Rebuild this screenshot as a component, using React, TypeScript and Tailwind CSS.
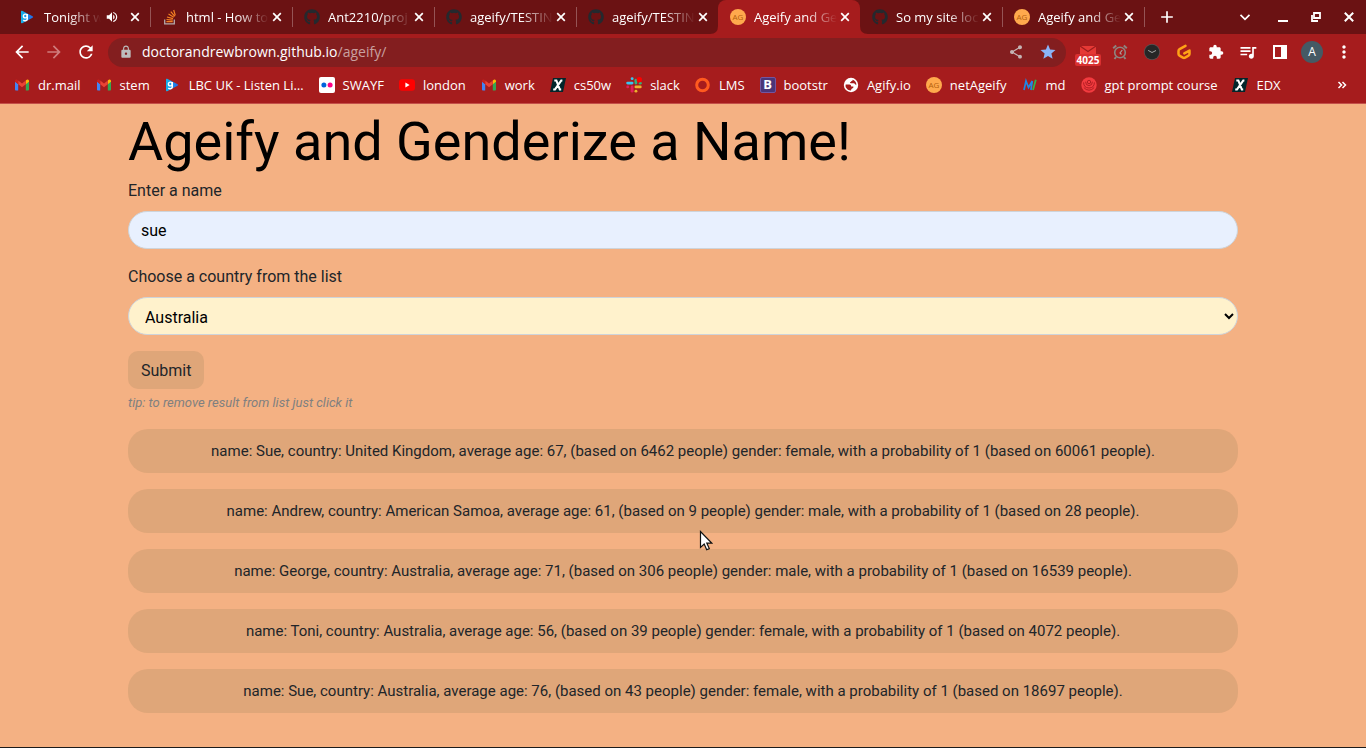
import React, { useState } from "react";
import { FaGithub } from "react-icons/fa";
import {
  MdArrowBack,
  MdArrowForward,
  MdRefresh,
  MdLock,
  MdShare,
  MdStar,
  MdExtension,
  MdQueueMusic,
  MdMoreVert,
  MdVolumeUp,
  MdAdd,
} from "react-icons/md";

/* ---------- favicons ---------- */

function GlobalPlayer() {
  return (
    <svg viewBox="0 0 16 16" className="size-4" aria-hidden="true">
      <defs>
        <linearGradient id="gp" x1="0" x2="1">
          <stop offset="0" stopColor="#14b4e8" />
          <stop offset="1" stopColor="#2468e8" />
        </linearGradient>
      </defs>
      <path d="M1 2.400Q1 1.300 2.200 1.800L12.600 7.200Q13.800 8 12.600 8.800L2.200 14.200Q1 14.700 1 13.600Z" fill="url(#gp)" />
      <circle cx="5.300" cy="7" r="1.900" fill="none" stroke="#fff" strokeWidth="1.400" />
      <path d="M7.300 5v4.800Q7.200 11.800 5.200 11.800 4 11.800 3.300 11" fill="none" stroke="#fff" strokeWidth="1.400" />
    </svg>
  );
}

function StackOverflow() {
  return (
    <svg viewBox="0 0 16 16" className="size-4" aria-hidden="true">
      <path d="M2.700 10.500v4.300h9.600v-4.300" fill="none" stroke="#b5a9a9" strokeWidth="1.300" />
      <path
        d="M4.400 12.700h6.300M4.500 10.500l6.200.7M5 8l6 1.700M6.500 5l5.300 3.200M8.800 2.600l4 4.700M11.700 1l1.600 5.400"
        stroke="#f48024"
        strokeWidth="1.200"
        fill="none"
      />
    </svg>
  );
}

function GitHub() {
  return <FaGithub className="size-4 text-[#24292e]" aria-hidden="true" />;
}

function AgBadge() {
  return (
    <span className="flex size-4 items-center justify-center rounded-full bg-[#ffa94d] text-[8px] leading-none text-[#b45f0c]">
      AG
    </span>
  );
}

function Gmail() {
  return (
    <svg viewBox="0 0 16 16" className="size-4" aria-hidden="true">
      <path d="M1 4.500v8q0 .9.9.9h2.300V7z" fill="#4285f4" />
      <path d="M11.800 13.400h2.300q.9 0 .9-.9v-8L11.800 7z" fill="#34a853" />
      <path d="M11.800 3.500V7.200L15 4.800V4Q15 2.400 13.600 2.500q-.4 0-.8.3z" fill="#fbbc04" />
      <path d="M4.200 7.300V3.500L8 6.400l3.800-2.900v3.800L8 10.200z" fill="#ea4335" />
      <path d="M1 4v.8l3.200 2.400V3.500l-1-.7Q2.600 2.400 2 2.600 1 2.900 1 4z" fill="#c5221f" />
    </svg>
  );
}

function Flickr() {
  return (
    <svg viewBox="0 0 16 16" className="size-4" aria-hidden="true">
      <rect width="16" height="16" rx="2" fill="#fff" />
      <circle cx="4.900" cy="8" r="2.500" fill="#0063dc" />
      <circle cx="11.100" cy="8" r="2.500" fill="#ff0084" />
    </svg>
  );
}

function YouTube() {
  return (
    <svg viewBox="0 0 16 16" className="size-4" aria-hidden="true">
      <rect y="2.300" width="16" height="11.400" rx="3" fill="#f00" />
      <path d="M6.400 5.600v4.800L10.600 8z" fill="#fff" />
    </svg>
  );
}

function Edx() {
  return (
    <svg viewBox="0 0 16 16" className="size-4" aria-hidden="true">
      <path d="M3 1h13l-3 14H0z" fill="#02262b" />
      <path
        d="M4.300 3.600h2.100l3.400 8.800h1.400M12.400 3.600h-1.200L5 12.400H3.200"
        fill="none"
        stroke="#fff"
        strokeWidth="2"
      />
    </svg>
  );
}

function Slack() {
  return (
    <svg viewBox="0 0 16 16" className="size-4" aria-hidden="true">
      <g strokeWidth="2.800" strokeLinecap="round">
        <path d="M1.600 6.100h4.500" stroke="#36c5f0" />
        <path d="M6.100 1.700h.1" stroke="#36c5f0" />
        <path d="M9.900 3.200v2.900" stroke="#2eb67d" />
        <path d="M14.200 6.200h.1" stroke="#2eb67d" />
        <path d="M9.900 9.900h4.400" stroke="#ecb22e" />
        <path d="M9.900 14.200h.1" stroke="#ecb22e" />
        <path d="M6.100 9.900v4.300" stroke="#e01e5a" />
        <path d="M1.700 9.900h.1" stroke="#e01e5a" />
      </g>
      <circle cx="13.300" cy="2.700" r="2.700" fill="#f00" />
    </svg>
  );
}

function Lms() {
  return (
    <svg viewBox="0 0 16 16" className="size-4" aria-hidden="true">
      <circle cx="7.500" cy="8" r="5.800" fill="none" stroke="#ff5a1f" strokeWidth="3" />
    </svg>
  );
}

function Bootstrap() {
  return (
    <span className="flex size-4 items-center justify-center rounded-xs border border-[#7355a0] bg-[#4b3577] text-[13px] leading-none font-bold text-white">
      B
    </span>
  );
}

function Globe() {
  return (
    <svg viewBox="0 0 16 16" className="size-4" aria-hidden="true">
      <circle cx="8" cy="8" r="7.200" fill="#fff" />
      <path
        d="M2.700 7.400h3.800q1.800.2 1.700 2h2.200q.3 1.800-1.400 2-.9.2-1 2.200Q4.400 13.400 2.800 10.300 2.300 9 2.700 7.400zM7.600 2.500h2.100q.2 1.600-1.500 1.800-.1 1-1.300 1 .1.900 1 .9h3.200l2.200 2.100Q13.600 3.800 9.400 2.400z"
        fill="#a61c1d"
      />
    </svg>
  );
}

function Markdown() {
  return (
    <svg viewBox="0 0 16 16" className="size-4" aria-hidden="true">
      <path d="M2 13L4 4l2.500 6.500L10.300 4 8.900 13" fill="none" stroke="#1e88e5" strokeWidth="1.700" />
      <path d="M13.800 2.800L11 13" stroke="#34b24a" strokeWidth="1.800" />
    </svg>
  );
}

function Course() {
  return (
    <svg viewBox="0 0 16 16" className="size-4" aria-hidden="true">
      <circle cx="8" cy="8" r="7.700" fill="#f23b3f" />
      <g fill="none" stroke="#b01d22" strokeWidth="1">
        <circle cx="8" cy="5" r="1.700" />
        <path d="M4.600 4.700Q4.600 8.600 8 8.600t3.400-3.900M2.600 5.400Q2.700 11 8 11t5.400-5.600M2.800 10.500Q5 13.200 8 13.200t5.200-2.700" />
      </g>
    </svg>
  );
}

/* ---------- browser chrome ---------- */

type Tab = { title: string; icon: React.ReactNode; audio?: boolean; active?: boolean; divider?: boolean };

const tabs: Tab[] = [
  { title: "Tonight w", icon: <GlobalPlayer />, audio: true, divider: true },
  { title: "html - How to", icon: <StackOverflow />, divider: true },
  { title: "Ant2210/proj", icon: <GitHub />, divider: true },
  { title: "ageify/TESTIN", icon: <GitHub />, divider: true },
  { title: "ageify/TESTIN", icon: <GitHub /> },
  { title: "Ageify and Ge", icon: <AgBadge />, active: true },
  { title: "So my site loc", icon: <GitHub />, divider: true },
  { title: "Ageify and Ge", icon: <AgBadge />, divider: true },
];

function TabItem({ tab }: { tab: Tab }) {
  return (
    <li
      className={
        tab.active
          ? "relative flex h-full w-[142px] min-w-0 items-center rounded-t-lg bg-[#a61c1d] pr-[7px] pl-3"
          : "relative flex h-full w-[142px] min-w-0 items-center pr-[7px] pl-3"
      }
    >
      {tab.active && (
        <>
          <svg viewBox="0 0 8 8" className="absolute bottom-0 -left-2 size-2" aria-hidden="true">
            <path d="M8 0v8H0Q8 8 8 0z" fill="#a61c1d" />
          </svg>
          <svg viewBox="0 0 8 8" className="absolute -right-2 bottom-0 size-2" aria-hidden="true">
            <path d="M0 0v8h8Q0 8 0 0z" fill="#a61c1d" />
          </svg>
        </>
      )}
      <span className="shrink-0">{tab.icon}</span>
      <span className="ml-2 min-w-0 flex-1 overflow-hidden whitespace-nowrap [mask-image:linear-gradient(to_right,#000_calc(100%-32px),transparent)]">
        {tab.title}
      </span>
      {tab.audio && <MdVolumeUp className="mr-2 ml-1 size-3.5 shrink-0" aria-label="Playing audio" />}
      <button type="button" aria-label="Close tab" className="flex size-4 shrink-0 items-center justify-center">
        <svg viewBox="0 0 10 10" className="size-2.5" aria-hidden="true">
          <path d="M1.200 1.200l7.600 7.600M8.800 1.200L1.200 8.800" stroke="#fff" strokeWidth="1.700" />
        </svg>
      </button>
      {tab.divider && <span className="absolute top-[7px] -right-px h-5 w-px bg-[#955455]" />}
    </li>
  );
}

const bookmarks: { label: string; icon: React.ReactNode }[] = [
  { label: "dr.mail", icon: <Gmail /> },
  { label: "stem", icon: <Gmail /> },
  { label: "LBC UK - Listen Li…", icon: <GlobalPlayer /> },
  { label: "SWAYF", icon: <Flickr /> },
  { label: "london", icon: <YouTube /> },
  { label: "work", icon: <Gmail /> },
  { label: "cs50w", icon: <Edx /> },
  { label: "slack", icon: <Slack /> },
  { label: "LMS", icon: <Lms /> },
  { label: "bootstr", icon: <Bootstrap /> },
  { label: "Agify.io", icon: <Globe /> },
  { label: "netAgeify", icon: <AgBadge /> },
  { label: "md", icon: <Markdown /> },
  { label: "gpt prompt course", icon: <Course /> },
  { label: "EDX", icon: <Edx /> },
];

function TabStrip() {
  return (
    <div className="flex h-[34px] items-center bg-[#6b1213] pr-2 pl-2">
      <ul className="flex h-full min-w-0">
        {tabs.map((tab, i) => (
          <TabItem key={i} tab={tab} />
        ))}
      </ul>
      <button type="button" aria-label="New tab" className="ml-[13px] shrink-0">
        <MdAdd className="size-5" />
      </button>
      <div className="ml-auto flex shrink-0 items-center gap-[15px]">
        <button type="button" aria-label="Search tabs" className="mr-1 flex size-5 items-center justify-center">
          <svg viewBox="0 0 12 12" className="size-3" aria-hidden="true">
            <path d="M1.500 3.800L6 8.300l4.500-4.500" fill="none" stroke="#fff" strokeWidth="1.700" />
          </svg>
        </button>
        <button type="button" aria-label="Minimize" className="flex size-[18px] items-center justify-center">
          <svg viewBox="0 0 12 12" className="size-3" aria-hidden="true">
            <path d="M1 10h10" stroke="#fff" strokeWidth="2" />
          </svg>
        </button>
        <button type="button" aria-label="Restore" className="flex size-[18px] items-center justify-center">
          <svg viewBox="0 0 12 12" className="size-3" aria-hidden="true">
            <path d="M4 2h6v5H4zM2 4v6h6" fill="none" stroke="#fff" strokeWidth="1.800" />
          </svg>
        </button>
        <button type="button" aria-label="Close window" className="flex size-[18px] items-center justify-center">
          <svg viewBox="0 0 12 12" className="size-3" aria-hidden="true">
            <path d="M1.800 1.800l8.400 8.400M10.200 1.800l-8.400 8.400" stroke="#fff" strokeWidth="2" />
          </svg>
        </button>
      </div>
    </div>
  );
}

function ToolButton({ label, children }: { label: string; children: React.ReactNode }) {
  return (
    <button type="button" aria-label={label} className="flex w-8 flex-col items-center justify-center">
      {children}
    </button>
  );
}

function Toolbar() {
  return (
    <div className="flex h-9 items-center bg-[#a61c1d] pr-1.5 pl-3">
      <div className="flex shrink-0 items-center gap-3">
        <button type="button" aria-label="Back">
          <MdArrowBack className="size-5" />
        </button>
        <button type="button" aria-label="Forward" className="text-[#cf7c7c]">
          <MdArrowForward className="size-5" />
        </button>
        <button type="button" aria-label="Reload">
          <MdRefresh className="size-5" />
        </button>
      </div>
      <div className="ml-3 flex h-[29px] min-w-0 flex-1 items-center rounded-full bg-[#831e1f] pr-0.5 pl-[11px]">
        <MdLock className="size-3.5 shrink-0 text-[#bdbdbd]" aria-hidden="true" />
        <a href="#top" className="ml-[9px] min-w-0 flex-1 truncate text-sm leading-5 text-[#c9a0a0]">
          <span className="text-white">doctorandrewbrown.github.io</span>/ageify/
        </a>
        <ToolButton label="Share">
          <MdShare className="size-4 text-[#c4b4b4]" />
        </ToolButton>
        <ToolButton label="Bookmark this tab">
          <MdStar className="size-[18px] text-[#8ab4f8]" />
        </ToolButton>
      </div>
      <div className="flex shrink-0 items-center pl-1.5">
        <ToolButton label="Unread mail">
          <svg viewBox="0 0 16 8" className="mt-2 h-2 w-4" aria-hidden="true">
            <path d="M0 0h16v8H0z" fill="#e53935" />
            <path d="M0 0l8 5.500L16 0" fill="none" stroke="#9b1c1c" strokeWidth="1.200" />
          </svg>
          <span className="rounded-xs bg-[#d93030] px-0.5 text-[10px] leading-3 font-bold">4025</span>
        </ToolButton>
        <ToolButton label="Alarm">
          <svg viewBox="0 0 16 16" className="size-4" aria-hidden="true">
            <circle cx="8" cy="8.500" r="5.300" fill="none" stroke="#8d8580" strokeWidth="1.600" />
            <path
              d="M1.200 4.200L4.200 1.600M11.800 1.600l3 2.600M4 13l-1.500 2M12 13l1.500 2"
              stroke="#8d8580"
              strokeWidth="2"
            />
            <path d="M10.300 6L8 9l1.500 1.500" fill="none" stroke="#a8a09c" strokeWidth="1.200" />
          </svg>
        </ToolButton>
        <ToolButton label="Clock">
          <svg viewBox="0 0 16 16" className="size-4" aria-hidden="true">
            <circle cx="8" cy="8" r="8" fill="#555" />
            <circle cx="8" cy="8" r="7.300" fill="#262626" />
            <path d="M4.200 6.400L8 8.500l4-2" fill="none" stroke="#a8a8a8" strokeWidth="1" />
          </svg>
        </ToolButton>
        <ToolButton label="Gitpod">
          <svg viewBox="0 0 16 16" className="size-4" aria-hidden="true">
            <path
              d="M9.500 1.900L3.600 5.200Q2.500 5.800 2.500 7v3q0 1.100 1 1.700l3.400 1.900q1.100.6 2.200 0l3.400-1.900q1-.6 1-1.700V6.600L8.300 9.400"
              fill="none"
              stroke="#ffa216"
              strokeWidth="2.500"
              strokeLinejoin="round"
              strokeLinecap="round"
            />
          </svg>
        </ToolButton>
        <ToolButton label="Extensions">
          <MdExtension className="size-4" />
        </ToolButton>
        <ToolButton label="Media controls">
          <MdQueueMusic className="size-5" />
        </ToolButton>
        <ToolButton label="Side panel">
          <svg viewBox="0 0 16 16" className="size-4" aria-hidden="true">
            <path d="M1 1h14v14H1zM3 3v10h6V3z" fill="#fff" fillRule="evenodd" />
          </svg>
        </ToolButton>
        <ToolButton label="Profile">
          <span className="flex size-[22px] items-center justify-center rounded-full bg-[#455a64] text-xs leading-none">
            A
          </span>
        </ToolButton>
        <ToolButton label="Menu">
          <MdMoreVert className="size-5" />
        </ToolButton>
      </div>
    </div>
  );
}

function BookmarksBar() {
  return (
    <nav
      aria-label="Bookmarks"
      className="flex h-[34px] items-center border-b border-[#c4504a] bg-[#a61c1d] pr-4 pb-1 pl-3.5"
    >
      <ul className="flex min-w-0 flex-1 gap-[15px] overflow-hidden whitespace-nowrap">
        {bookmarks.map((b, i) => (
          <li key={i} className="shrink-0">
            <a href="#top" className="flex items-center gap-2">
              {b.icon}
              {b.label}
            </a>
          </li>
        ))}
      </ul>
      <button type="button" aria-label="More bookmarks" className="flex size-4 items-center justify-center">
        <svg viewBox="0 0 10 10" className="size-2.5" aria-hidden="true">
          <path d="M1.500 2l3 3-3 3M5.500 2l3 3-3 3" fill="none" stroke="#fff" strokeWidth="1.500" />
        </svg>
      </button>
    </nav>
  );
}

/* ---------- page ---------- */

const initialResults = [
  "name: Sue, country: United Kingdom, average age: 67, (based on 6462 people) gender: female, with a probability of 1 (based on 60061 people).",
  "name: Andrew, country: American Samoa, average age: 61, (based on 9 people) gender: male, with a probability of 1 (based on 28 people).",
  "name: George, country: Australia, average age: 71, (based on 306 people) gender: male, with a probability of 1 (based on 16539 people).",
  "name: Toni, country: Australia, average age: 56, (based on 39 people) gender: female, with a probability of 1 (based on 4072 people).",
  "name: Sue, country: Australia, average age: 76, (based on 43 people) gender: female, with a probability of 1 (based on 18697 people).",
];

function Page() {
  const [results, setResults] = useState(initialResults);
  return (
    <main className="flex-1 border-b border-[#1c1c1c] bg-[#f4b183] px-4 font-['Roboto',sans-serif] text-base text-[#212529]">
      <div className="mx-auto w-full max-w-[1110px]">
        <h1 className="text-[54px] leading-[75px] text-black">Ageify and Genderize a Name!</h1>
        <form onSubmit={(e) => e.preventDefault()}>
          <label htmlFor="name" className="mb-2 block">
            Enter a name
          </label>
          <input
            id="name"
            type="text"
            defaultValue="sue"
            className="mb-4 block h-[38px] w-full rounded-full border border-[#ced4da] bg-[#e8f0fe] px-3 text-black"
          />
          <label htmlFor="country" className="mb-2 block">
            Choose a country from the list
          </label>
          <select
            id="country"
            defaultValue="Australia"
            className="mb-4 block h-[38px] w-full rounded-[20px] border border-[#ced4da] bg-[#fff2cc] px-3 pt-0.5 text-black"
          >
            <option>Australia</option>
            <option>American Samoa</option>
            <option>United Kingdom</option>
          </select>
          <button type="submit" className="block h-[38px] rounded-[10px] bg-[#dfa679] px-[13px] pt-0.5">
            Submit
          </button>
        </form>
        <p className="mt-1 mb-4 text-[13px] leading-5 text-[#808080] italic">
          tip: to remove result from list just click it
        </p>
        <ul className="flex flex-col gap-4 pb-8 text-center text-[15px] leading-6">
          {results.map((r) => (
            <li key={r}>
              <button
                type="button"
                onClick={() => setResults(results.filter((x) => x !== r))}
                className="block w-full rounded-[20px] bg-[#dfa679] px-4 py-2.5"
              >
                {r}
              </button>
            </li>
          ))}
        </ul>
      </div>
    </main>
  );
}

function Pointer() {
  return (
    <svg
      viewBox="0 0 14 21"
      className="pointer-events-none absolute top-[530px] left-[699px] h-[21px] w-3.5"
      aria-hidden="true"
    >
      <path
        d="M1.500 1.500v16l3.700-3.400 2.500 5.600 2.600-1.100-2.500-5.500h4.900z"
        fill="#fff"
        stroke="#111"
        strokeWidth="1.200"
      />
    </svg>
  );
}

export default function App() {
  return (
    <div id="top" className="relative flex min-h-screen flex-col">
      <header className="font-['Open_Sans','Noto_Sans',sans-serif] text-[13px] leading-5 text-white">
        <TabStrip />
        <Toolbar />
        <BookmarksBar />
      </header>
      <Page />
      <Pointer />
    </div>
  );
}
